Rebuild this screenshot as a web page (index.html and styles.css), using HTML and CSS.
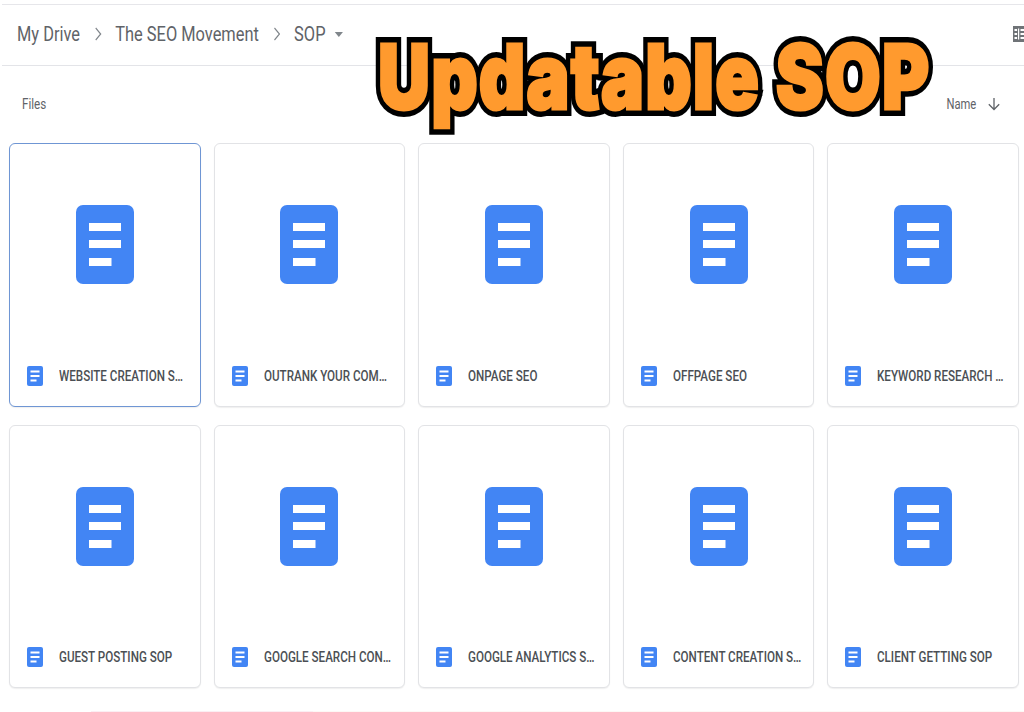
FILE: index.html
```html
<!DOCTYPE html>
<html lang="en">
<head>
<meta charset="utf-8">
<title>SOP - Google Drive</title>
<link rel="stylesheet" href="styles.css">
</head>
<body>
<div class="page">
  <header class="topbar">
    <nav class="crumbs">
      <span class="crumb">My Drive</span>
      <svg class="chev" viewBox="0 0 10 16"><path d="M2 2l6 6-6 6" fill="none" stroke="#80868b" stroke-width="1.4"/></svg>
      <span class="crumb">The SEO Movement</span>
      <svg class="chev" viewBox="0 0 10 16"><path d="M2 2l6 6-6 6" fill="none" stroke="#80868b" stroke-width="1.4"/></svg>
      <span class="crumb">SOP</span>
      <svg class="caret" viewBox="0 0 10 5"><path d="M0 0h10L5 5z" fill="#80868b"/></svg>
    </nav>
    <svg class="listicon" viewBox="0 0 18 16"><path d="M0 0h18v16H0z" fill="#6f7377"/><path d="M5 2.500h1.200v11H5zM1.500 3h2.600v2H1.500zM1.500 7h2.600v2H1.500zM1.500 11h2.600v2H1.500zM7.500 3h9v2h-9zM7.500 7h9v2h-9zM7.500 11h9v2h-9z" fill="#fff"/></svg>
  </header>
  <div class="sectionhead">
    <span class="files">Files</span>
    <span class="sort"><span class="sortname">Name</span>
      <svg class="arrow" viewBox="0 0 14 14"><path d="M7 1v11.500M1.800 7.300L7 12.500l5.200-5.200" fill="none" stroke="#5f6368" stroke-width="1.300"/></svg>
    </span>
  </div>
  <main class="grid">
    <article class="card selected"><div class="thumb"><svg class="doc" viewBox="0 0 58 79"><rect width="58" height="79" rx="7" fill="#4285f4"/><path d="M13 18h32v8H13zM13 35h32v8H13zM13 53h22.500v8H13z" fill="#fff"/></svg></div><div class="label"><svg class="mini" viewBox="0 0 16 20"><rect width="16" height="20" rx="2" fill="#4285f4"/><path d="M3.500 4.500h9v2h-9zM3.500 9h9v2h-9zM3.500 13.500h6v2h-6z" fill="#fff"/></svg><span class="name">WEBSITE CREATION SOP DOCUMENT</span></div></article>
    <article class="card"><div class="thumb"><svg class="doc" viewBox="0 0 58 79"><rect width="58" height="79" rx="7" fill="#4285f4"/><path d="M13 18h32v8H13zM13 35h32v8H13zM13 53h22.500v8H13z" fill="#fff"/></svg></div><div class="label"><svg class="mini" viewBox="0 0 16 20"><rect width="16" height="20" rx="2" fill="#4285f4"/><path d="M3.500 4.500h9v2h-9zM3.500 9h9v2h-9zM3.500 13.500h6v2h-6z" fill="#fff"/></svg><span class="name">OUTRANK YOUR COMPETITORS SOP</span></div></article>
    <article class="card"><div class="thumb"><svg class="doc" viewBox="0 0 58 79"><rect width="58" height="79" rx="7" fill="#4285f4"/><path d="M13 18h32v8H13zM13 35h32v8H13zM13 53h22.500v8H13z" fill="#fff"/></svg></div><div class="label"><svg class="mini" viewBox="0 0 16 20"><rect width="16" height="20" rx="2" fill="#4285f4"/><path d="M3.500 4.500h9v2h-9zM3.500 9h9v2h-9zM3.500 13.500h6v2h-6z" fill="#fff"/></svg><span class="name">ONPAGE SEO</span></div></article>
    <article class="card"><div class="thumb"><svg class="doc" viewBox="0 0 58 79"><rect width="58" height="79" rx="7" fill="#4285f4"/><path d="M13 18h32v8H13zM13 35h32v8H13zM13 53h22.500v8H13z" fill="#fff"/></svg></div><div class="label"><svg class="mini" viewBox="0 0 16 20"><rect width="16" height="20" rx="2" fill="#4285f4"/><path d="M3.500 4.500h9v2h-9zM3.500 9h9v2h-9zM3.500 13.500h6v2h-6z" fill="#fff"/></svg><span class="name">OFFPAGE SEO</span></div></article>
    <article class="card"><div class="thumb"><svg class="doc" viewBox="0 0 58 79"><rect width="58" height="79" rx="7" fill="#4285f4"/><path d="M13 18h32v8H13zM13 35h32v8H13zM13 53h22.500v8H13z" fill="#fff"/></svg></div><div class="label"><svg class="mini" viewBox="0 0 16 20"><rect width="16" height="20" rx="2" fill="#4285f4"/><path d="M3.500 4.500h9v2h-9zM3.500 9h9v2h-9zM3.500 13.500h6v2h-6z" fill="#fff"/></svg><span class="name">KEYWORD RESEARCH SOP DOCUMENT</span></div></article>
    <article class="card"><div class="thumb"><svg class="doc" viewBox="0 0 58 79"><rect width="58" height="79" rx="7" fill="#4285f4"/><path d="M13 18h32v8H13zM13 35h32v8H13zM13 53h22.500v8H13z" fill="#fff"/></svg></div><div class="label"><svg class="mini" viewBox="0 0 16 20"><rect width="16" height="20" rx="2" fill="#4285f4"/><path d="M3.500 4.500h9v2h-9zM3.500 9h9v2h-9zM3.500 13.500h6v2h-6z" fill="#fff"/></svg><span class="name">GUEST POSTING SOP</span></div></article>
    <article class="card"><div class="thumb"><svg class="doc" viewBox="0 0 58 79"><rect width="58" height="79" rx="7" fill="#4285f4"/><path d="M13 18h32v8H13zM13 35h32v8H13zM13 53h22.500v8H13z" fill="#fff"/></svg></div><div class="label"><svg class="mini" viewBox="0 0 16 20"><rect width="16" height="20" rx="2" fill="#4285f4"/><path d="M3.500 4.500h9v2h-9zM3.500 9h9v2h-9zM3.500 13.500h6v2h-6z" fill="#fff"/></svg><span class="name">GOOGLE SEARCH CONSOLE SOP</span></div></article>
    <article class="card"><div class="thumb"><svg class="doc" viewBox="0 0 58 79"><rect width="58" height="79" rx="7" fill="#4285f4"/><path d="M13 18h32v8H13zM13 35h32v8H13zM13 53h22.500v8H13z" fill="#fff"/></svg></div><div class="label"><svg class="mini" viewBox="0 0 16 20"><rect width="16" height="20" rx="2" fill="#4285f4"/><path d="M3.500 4.500h9v2h-9zM3.500 9h9v2h-9zM3.500 13.500h6v2h-6z" fill="#fff"/></svg><span class="name">GOOGLE ANALYTICS SOP DOCUMENT</span></div></article>
    <article class="card"><div class="thumb"><svg class="doc" viewBox="0 0 58 79"><rect width="58" height="79" rx="7" fill="#4285f4"/><path d="M13 18h32v8H13zM13 35h32v8H13zM13 53h22.500v8H13z" fill="#fff"/></svg></div><div class="label"><svg class="mini" viewBox="0 0 16 20"><rect width="16" height="20" rx="2" fill="#4285f4"/><path d="M3.500 4.500h9v2h-9zM3.500 9h9v2h-9zM3.500 13.500h6v2h-6z" fill="#fff"/></svg><span class="name">CONTENT CREATION SOP DOCUMENT</span></div></article>
    <article class="card"><div class="thumb"><svg class="doc" viewBox="0 0 58 79"><rect width="58" height="79" rx="7" fill="#4285f4"/><path d="M13 18h32v8H13zM13 35h32v8H13zM13 53h22.500v8H13z" fill="#fff"/></svg></div><div class="label"><svg class="mini" viewBox="0 0 16 20"><rect width="16" height="20" rx="2" fill="#4285f4"/><path d="M3.500 4.500h9v2h-9zM3.500 9h9v2h-9zM3.500 13.500h6v2h-6z" fill="#fff"/></svg><span class="name">CLIENT GETTING SOP</span></div></article>
  </main>
  <div class="footline"></div>
  <h1 class="overlay" data-text="Updatable SOP">Updatable SOP</h1>
</div>
</body>
</html>
```
FILE: styles.css
```css
* { box-sizing: border-box; }
html, body { margin: 0; height: 100%; }
body { background: #fff; font-family: Roboto, "Liberation Sans", sans-serif; overflow: hidden; }
.page { position: relative; width: 1024px; height: 712px; padding-top: 4px; overflow: hidden; }
.topbar {
  display: flex; align-items: center; justify-content: space-between;
  height: 62px; margin-left: 2px; padding: 0 0 2px 15px;
  border-top: 1.500px solid #e6e6ea; border-bottom: 1.500px solid #e3e4e8;
}
.crumbs { display: flex; align-items: center; transform: scaleX(.82); transform-origin: left center; }
.crumb { font-size: 20px; color: #5f6368; white-space: nowrap; }
.chev { width: 10px; height: 16px; margin: 0 16px 0 17px; }
.caret { width: 11px; height: 5px; margin-left: 11px; }
.listicon { width: 18px; height: 16px; margin-right: -7px; }
.sectionhead {
  display: flex; justify-content: space-between; align-items: center;
  height: 76px; padding: 0 23px 0 22px;
}
.files { font-size: 14px; color: #5f6368; transform: scaleX(.83); transform-origin: left center; }
.sort { display: flex; align-items: center; gap: 11px; font-size: 14px; color: #5f6368; }
.sortname { transform: scaleX(.8); transform-origin: right center; }
.arrow { width: 14px; height: 14px; }
.grid {
  display: grid; grid-template-columns: repeat(5, minmax(0, 1fr)); gap: 18px 13px;
  padding: 1px 5px 0 9px;
}
.card {
  height: 263.500px; display: flex; flex-direction: column;
  background: #fff; border: 1px solid #e2e3e6; border-radius: 6px;
  box-shadow: 0 1px 1px rgba(60,64,67,.08);
}
.card.selected { border-color: #6f96d4; }
.thumb { height: 203px; display: flex; justify-content: center; padding-top: 61px; }
.doc { width: 58px; height: 79px; }
.label { display: flex; align-items: center; height: 60px; padding-left: 17px; gap: 16px; }
.mini { width: 16px; height: 20px; flex: none; }
.name {
  flex: none; width: 157px; font-size: 14px; font-weight: 500; color: #4b4f54;
  white-space: nowrap; overflow: hidden; text-overflow: ellipsis;
  transform: scaleX(.83); transform-origin: left center;
}
.footline {
  position: absolute; left: 91px; right: 0; bottom: 0; height: 1px;
  background: linear-gradient(90deg, #fbeef3 0, #fbeef3 222px, #fdf8f5 222px);
}
.overlay {
  position: absolute; left: 378px; top: 27px; margin: 0;
  font-family: Inter, sans-serif; font-weight: 900; font-size: 90px; line-height: 100px;
  letter-spacing: 1.500px; color: #ff9a2e; white-space: nowrap;
  -webkit-text-stroke: 14px #000; paint-order: stroke fill; stroke-linejoin: round;
  transform: scaleX(.8); transform-origin: left center;
}
.overlay::after {
  content: attr(data-text); position: absolute; left: 0; top: 0;
  -webkit-text-stroke: 3px #ff9a2e;
}
```
